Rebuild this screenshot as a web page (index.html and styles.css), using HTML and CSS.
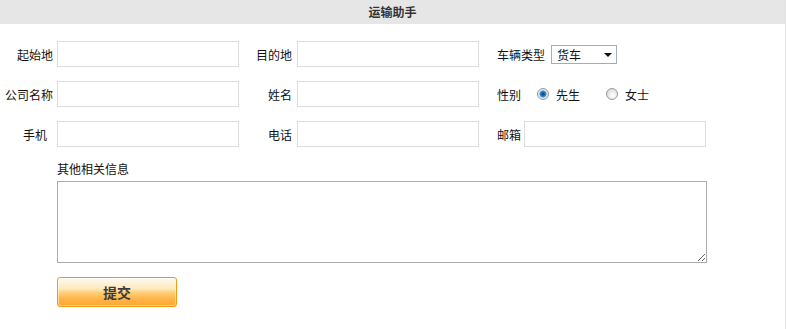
FILE: index.html
```html
<!DOCTYPE html>
<html>
<head>
<meta charset="utf-8" />
<title>运输助手</title>
<link rel="stylesheet" href="styles.css">
</head>
<body>
<div class="page">
<div class="head">运输助手</div>
<form id="transportForm" class="form">
<div class="row">
<label class="col_label" for="from">起始地</label>
<input class="txt" id="from" name="from" type="text" />
<label class="col_label col_label2" for="to">目的地</label>
<input class="txt" id="to" name="to" type="text" />
<div class="col3">
<label for="vehicle">车辆类型</label>
<span class="select_wrap"><select id="vehicle" name="vehicle">
<option value="truck">货车</option>
<option value="van">面包车</option>
</select></span>
</div>
</div>
<div class="row">
<label class="col_label" for="company">公司名称</label>
<input class="txt" id="company" name="company" type="text" />
<label class="col_label col_label2" for="name">姓名</label>
<input class="txt" id="name" name="name" type="text" />
<div class="col3">
<span class="sex_label">性别</span>
<label class="radio"><input type="radio" name="sex" value="M" checked /><span>先生</span></label>
<label class="radio"><input type="radio" name="sex" value="F" /><span>女士</span></label>
</div>
</div>
<div class="row">
<label class="col_label col_label_short" for="mobile">手机</label>
<input class="txt" id="mobile" name="mobile" type="text" />
<label class="col_label col_label2" for="phone">电话</label>
<input class="txt" id="phone" name="phone" type="text" />
<div class="col3">
<label class="mail_label" for="mail">邮箱</label>
<input class="txt" id="mail" name="mail" type="text" />
</div>
</div>
<div class="info">
<label for="other">其他相关信息</label>
<textarea id="other" name="other"></textarea>
<button type="submit" class="btn">提交</button>
</div>
</form>
</div>
</body>
</html>
```

FILE: styles.css
```css
body {
margin: 0;
font-family: "Noto Sans CJK SC", "DejaVu Sans", sans-serif;
font-size: 12px;
color: #111; }
.page {
width: 785px;
height: 329px;
border-right: 1px solid #e2e2e2; }
.head {
height: 24px;
line-height: 24px;
background-color: #e6e6e6;
text-align: center;
font-weight: bold;
color: #333; }
.form { padding-top: 17px; }
.row {
display: flex;
align-items: center;
height: 26px;
margin-bottom: 14px; }
.col_label {
width: 53px;
margin-right: 4px;
text-align: right; }
.col_label_short { width: 47px; margin-right: 10px; }
.col_label2 { margin-right: 5px; }
.txt {
box-sizing: border-box;
width: 182px;
height: 26px;
margin: 0;
padding: 2px 4px;
border: 1px solid #dcdcdc;
outline: none;
font-family: inherit; }
.col3 {
display: flex;
align-items: center;
padding-left: 18px; }
.select_wrap {
position: relative;
display: inline-block;
margin-left: 6px; }
.select_wrap select {
-webkit-appearance: none;
appearance: none;
box-sizing: border-box;
width: 66px;
height: 19px;
margin: 0;
padding: 0 0 0 5px;
border: 1px solid #a5acb2;
border-radius: 0;
background-color: #fff;
font-family: inherit;
font-size: 12px;
color: #111;
outline: none; }
.select_wrap::after {
content: "";
position: absolute;
right: 5px;
top: 8px;
border-left: 4px solid transparent;
border-right: 4px solid transparent;
border-top: 4px solid #111;
pointer-events: none; }
.sex_label { margin-right: 16px; }
.radio {
display: flex;
align-items: center;
margin-right: 26px; }
.radio input {
-webkit-appearance: none;
appearance: none;
box-sizing: border-box;
width: 12px;
height: 12px;
margin: 0 7px 0 0;
border: 1px solid #9a9a9a;
border-radius: 50%;
background: radial-gradient(circle at 60% 65%, #ffffff 0%, #f0f0f0 35%, #cfcfcf 100%);
outline: none; }
.radio input:checked {
background: radial-gradient(circle at 50% 50%, #0d3f73 0%, #1b6bb5 25%, #3f9be0 45%, #e8e8e8 55%, #d2d2d2 100%); }
.mail_label { margin-right: 3px; }
.info { padding-left: 57px; }
.info label {
display: block;
line-height: 16px; }
.info textarea {
display: block;
box-sizing: border-box;
width: 650px;
height: 82px;
margin: 4px 0 14px 0;
border: 1px solid #a9acb0;
font-family: inherit; }
.btn {
display: block;
box-sizing: border-box;
width: 120px;
height: 30px;
padding: 0;
border: 1px solid #f39a12;
border-radius: 3px;
background: linear-gradient(#fffaf0 0%, #fde9bd 38%, #ffcf78 52%, #ffb448 75%, #ffa733 100%);
box-shadow: inset 0 0 0 1px rgba(255, 255, 255, 0.45);
font-family: inherit;
font-size: 14px;
font-weight: bold;
color: #3a3a3a;
cursor: pointer; }
```
